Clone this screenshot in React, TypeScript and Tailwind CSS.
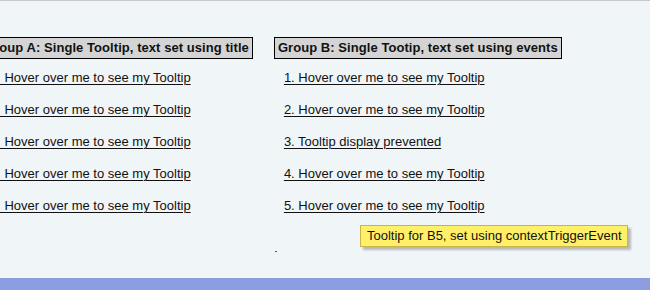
import React from "react";

const items = [
  "1. Hover over me to see my Tooltip",
  "2. Hover over me to see my Tooltip",
  "3. Hover over me to see my Tooltip",
  "4. Hover over me to see my Tooltip",
  "5. Hover over me to see my Tooltip",
];

const itemsB = [
  "1. Hover over me to see my Tooltip",
  "2. Hover over me to see my Tooltip",
  "3. Tooltip display prevented",
  "4. Hover over me to see my Tooltip",
  "5. Hover over me to see my Tooltip",
];

function Group({ title, links }: { title: string; links: string[] }) {
  return (
    <div className="flex flex-col items-start">
      <div className="border border-black bg-[#d4d4d4] px-[3px] py-[3px] text-[13px] font-bold leading-[14px] tracking-[0.06px] text-[#111] whitespace-nowrap">
        {title}
      </div>
      <div className="mt-[11px] flex flex-col gap-[17px] pl-[10px]">
        {links.map((l, i) => (
          <a
            key={i}
            href="#"
            className="block text-[13px] leading-[15px] text-[#111] underline underline-offset-[2px] decoration-1 whitespace-nowrap"
          >
            {l}
          </a>
        ))}
      </div>
    </div>
  );
}

export default function App() {
  return (
    <div
      className="relative flex h-[290px] w-[650px] flex-col overflow-hidden bg-[#f0f5f8]"
      style={{ fontFamily: '"Liberation Sans", Arial, sans-serif' }}
    >
      <div className="h-[1px] w-full bg-[#c8c8c8]" />
      <div className="ml-[-20px] mt-[36px] flex gap-[21px]">
        <Group title="Group A: Single Tooltip, text set using title" links={items} />
        <Group title="Group B: Single Tootip, text set using events" links={itemsB} />
      </div>
      <div className="flex-1" />
      <div className="h-[12px] w-full bg-[#8b9ce0]" />

      <div className="absolute left-[360px] top-[225px] h-[22px] w-[268px] border border-[#c9b34a] bg-[#fff068] pl-[6px] text-[13px] leading-[20px] text-[#111] shadow-[3px_3px_2px_#b9b9b9] whitespace-nowrap">
        Tooltip for B5, set using contextTriggerEvent
      </div>
      <div className="absolute left-[275px] top-[251px] h-[1px] w-[2px] bg-[#555]" />
    </div>
  );
}
